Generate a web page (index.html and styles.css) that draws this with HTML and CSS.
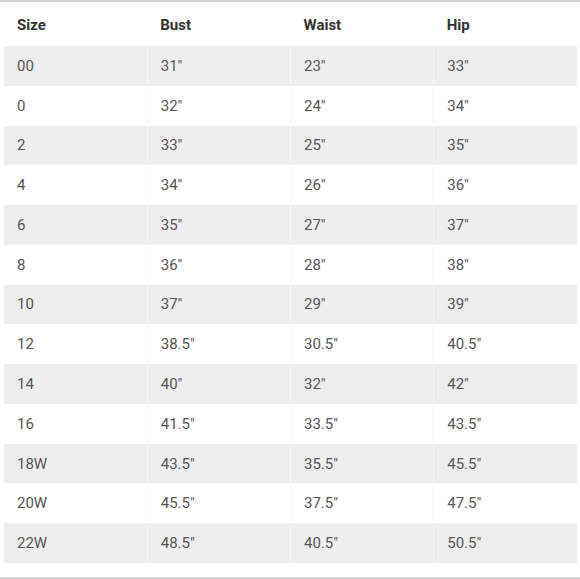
FILE: index.html
```html
<!DOCTYPE html>
<html>
<head>
<meta charset="utf-8">
<link rel="stylesheet" href="styles.css">
</head>
<body>
<div class="frame">
  <table class="chart">
    <thead>
      <tr><th>Size</th><th>Bust</th><th>Waist</th><th>Hip</th></tr>
    </thead>
    <tbody>
      <tr><td>00</td><td>31"</td><td>23"</td><td>33"</td></tr>
      <tr><td>0</td><td>32"</td><td>24"</td><td>34"</td></tr>
      <tr><td>2</td><td>33"</td><td>25"</td><td>35"</td></tr>
      <tr><td>4</td><td>34"</td><td>26"</td><td>36"</td></tr>
      <tr><td>6</td><td>35"</td><td>27"</td><td>37"</td></tr>
      <tr><td>8</td><td>36"</td><td>28"</td><td>38"</td></tr>
      <tr><td>10</td><td>37"</td><td>29"</td><td>39"</td></tr>
      <tr><td>12</td><td>38.5"</td><td>30.5"</td><td>40.5"</td></tr>
      <tr><td>14</td><td>40"</td><td>32"</td><td>42"</td></tr>
      <tr><td>16</td><td>41.5"</td><td>33.5"</td><td>43.5"</td></tr>
      <tr><td>18W</td><td>43.5"</td><td>35.5"</td><td>45.5"</td></tr>
      <tr><td>20W</td><td>45.5"</td><td>37.5"</td><td>47.5"</td></tr>
      <tr><td>22W</td><td>48.5"</td><td>40.5"</td><td>50.5"</td></tr>
    </tbody>
  </table>
</div>
</body>
</html>
```
FILE: styles.css
```css
html, body {
  margin: 0;
  padding: 0;
  background: #ffffff;
}
.frame {
  width: 580px;
  height: 579px;
  box-sizing: border-box;
  border-top: 2px solid #cfcfcf;
  border-bottom: 2px solid #d6d6d6;
  padding: 0 3px 0 4px;
  font-family: Roboto, "Liberation Sans", sans-serif;
}
.chart {
  width: 573px;
  border-collapse: collapse;
  table-layout: fixed;
}
.chart th {
  height: 44px;
  box-sizing: border-box;
  padding: 2px 0 0 13px;
  text-align: left;
  font-weight: 700;
  font-size: 15px;
  color: #333333;
  vertical-align: middle;
}
.chart td {
  height: 39.77px;
  padding: 0 0 0 13px;
  font-size: 15px;
  color: #555555;
  vertical-align: middle;
}
.chart td + td {
  border-left: 1px solid #f7f7f7;
}
.chart tbody tr:nth-child(odd) td {
  background: #eeeeee;
}
```
